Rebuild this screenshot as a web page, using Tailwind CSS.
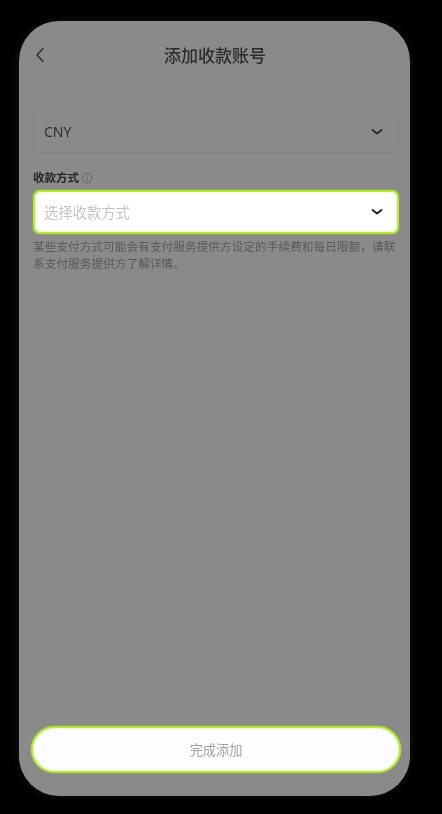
<!DOCTYPE html>
<html lang="zh">
<head>
  <meta charset="UTF-8">
  <meta name="viewport" content="width=device-width, initial-scale=1.0">
  <title>添加收款账号</title>
  <script src="https://cdn.jsdelivr.net/npm/@tailwindcss/browser@4"></script>
</head>
<body class="bg-black font-['Noto_Sans','Noto_Sans_CJK_SC',sans-serif]">
  <div class="w-[442px] h-[814px] overflow-hidden pt-[21px] pl-[19px]">
    <!-- Phone -->
    <div class="w-[391px] h-[775px] rounded-[40px] bg-[#8a8a8a] shadow-[0_0_8px_rgba(40,40,40,0.6)] flex flex-col">

      <!-- Header -->
      <div class="relative h-[70px] flex items-center justify-center">
        <svg class="absolute left-[15px] top-[25px] w-[12px] h-[18px]" viewBox="0 0 12 18" fill="none" stroke="#2b2b2b" stroke-width="1.4" stroke-linecap="round" stroke-linejoin="round">
          <path d="M9 2.5 L3 9 L9 15.5" />
        </svg>
        <h1 class="text-[17px] font-medium text-[#2c2c2c] ml-[1px] blur-[0.4px]">添加收款账号</h1>
      </div>

      <div class="pl-[14px] pr-[12px] pt-[19px] flex-1 flex flex-col">
        <!-- Currency -->
        <div class="h-[43px] rounded-[6px] border border-[#828282] bg-[#8a8a8a] flex items-center justify-between pl-[10px] pr-[14px]">
          <span class="text-[14px] text-[#2e2e2e] blur-[0.4px]">CNY</span>
          <svg class="w-[12px] h-[8px]" viewBox="0 0 12 8" fill="none" stroke="#2b2b2b" stroke-width="1.8" stroke-linecap="round" stroke-linejoin="round">
            <path d="M1.5 2 L6 5.5 L10.5 2" />
          </svg>
        </div>

        <!-- Method label -->
        <div class="mt-[16px] h-[18px] flex items-center gap-[2px]">
          <span class="text-[11.5px] font-semibold text-[#262626] blur-[0.4px]">收款方式</span>
          <svg class="w-[12px] h-[12px]" viewBox="0 0 12 12" fill="none" stroke="#5c5c5c" stroke-width="0.8">
            <circle cx="6" cy="6" r="4.8" />
            <path d="M6 5.2 V8.6 M6 3.4 V4.2" />
          </svg>
        </div>

        <!-- Method select, highlighted -->
        <div class="mt-[3px] -mr-[1px] h-[44px] rounded-[7px] bg-white border-[2px] border-[#b4e83a] shadow-[0_0_2px_#9ccc30,inset_0_0_3px_#d4f58a] flex items-center justify-between pl-[9px] pr-[14px]">
          <span class="pt-[2px] text-[14.3px] text-[#c4c4c4] blur-[0.4px]">选择收款方式</span>
          <svg class="w-[12px] h-[8px]" viewBox="0 0 12 8" fill="none" stroke="#1f1f1f" stroke-width="1.9" stroke-linecap="round" stroke-linejoin="round">
            <path d="M1.5 2 L6 5.5 L10.5 2" />
          </svg>
        </div>

        <p class="mt-[4px] text-[11.7px] leading-[17px] text-[#5a5a5a] blur-[0.5px]">某些支付方式可能会有支付服务提供方设定的手续费和每日限额，请联系支付服务提供方了解详情。</p>

        <!-- Submit -->
        <div class="mt-auto mb-[23px] -ml-[2px] -mr-[3px] h-[47px] rounded-full bg-[#fdfdff] border-[2px] border-[#b4e83a] shadow-[0_0_2px_#9ccc30,inset_0_0_3px_#d4f58a] flex items-center justify-center">
          <span class="pt-[3px] text-[13.2px] text-[#a3a3a3] blur-[0.4px]">完成添加</span>
        </div>
      </div>
    </div>
  </div>
</body>
</html>
